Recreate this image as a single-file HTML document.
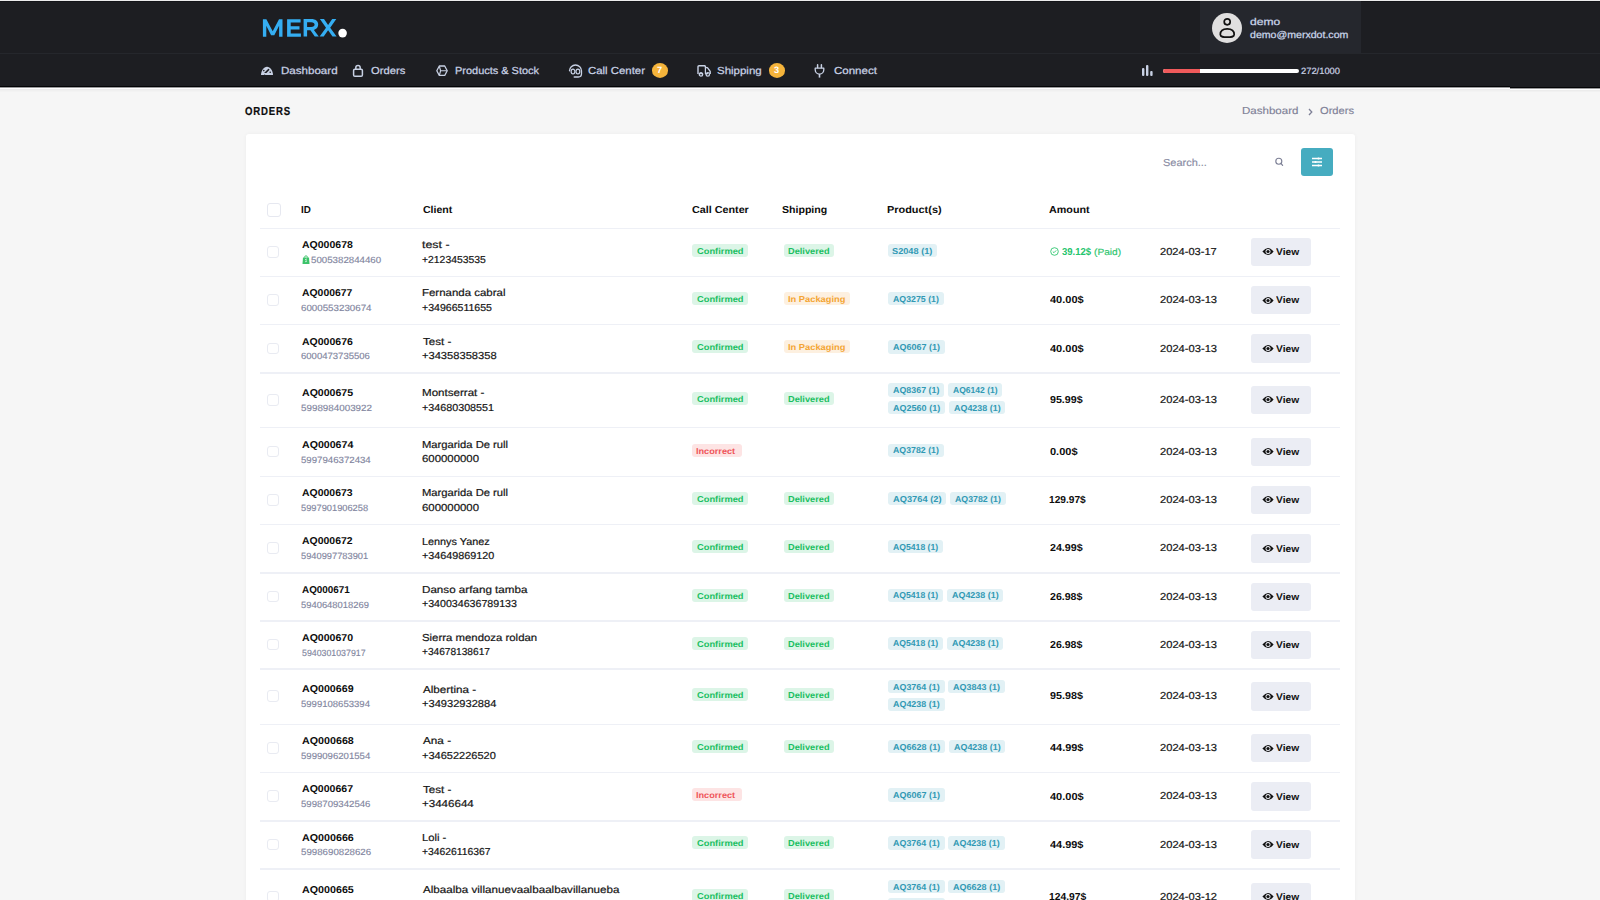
<!DOCTYPE html><html><head><meta charset="utf-8"><style>
*{margin:0;padding:0;box-sizing:border-box}
html,body{width:1600px;height:900px;overflow:hidden;background:#f6f6f6;font-family:"Liberation Sans",sans-serif}
.t{position:absolute;line-height:1;white-space:nowrap;text-rendering:geometricPrecision;transform-origin:0 0}
.abs{position:absolute}
.bd{position:absolute;border-radius:3px}
</style></head><body>

<div class="abs" style="left:0;top:0;width:1600px;height:86px;background:#1d1e22"></div>
<div class="abs" style="left:0;top:0;width:1600px;height:1px;background:#ececec"></div>
<div class="abs" style="left:0;top:1px;width:1600px;height:1px;background:#141519"></div>
<div class="abs" style="left:0;top:53px;width:1600px;height:1px;background:#25272c"></div>
<div class="abs" style="left:0;top:86px;width:1510px;height:1px;background:#040507"></div>
<div class="abs" style="left:0;top:87px;width:1510px;height:1px;background:#9a9a9c"></div>
<div class="abs" style="left:0;top:88px;width:1510px;height:1px;background:#ffffff"></div>
<div class="abs" style="left:0;top:89px;width:1510px;height:1px;background:#ececec"></div>
<div class="abs" style="left:0;top:90px;width:1510px;height:1px;background:#f0f0f0"></div>
<div class="abs" style="left:0;top:91px;width:1510px;height:1px;background:#f3f3f3"></div>
<div class="abs" style="left:1510px;top:86px;width:90px;height:1px;background:#1d1e22"></div>
<div class="abs" style="left:1510px;top:87px;width:90px;height:1px;background:#040507"></div>
<div class="abs" style="left:1510px;top:88px;width:90px;height:1px;background:#9a9a9c"></div>
<div class="abs" style="left:1510px;top:89px;width:90px;height:1px;background:#ffffff"></div>
<div class="abs" style="left:1510px;top:90px;width:90px;height:1px;background:#ececec"></div>
<div class="abs" style="left:1510px;top:91px;width:90px;height:1px;background:#f1f1f1"></div>
<svg class="abs" style="left:0;top:0" width="360" height="50" viewBox="0 0 360 50"><g fill="#35aef2"><path d="M262.9 36.7 V19.2 H266.4 L272.7 31.2 L279 19.2 H282.5 V36.7 H279.1 V25.8 L274.3 35.2 H271.1 L266.3 25.8 V36.7 Z"/><path d="M287.1 19.2 H300.6 V22.5 H290.7 V26.3 H299.5 V29.4 H290.7 V33.4 H300.9 V36.7 H287.1 Z"/><path fill-rule="evenodd" d="M303.6 36.6 V19.1 H311.3 C315.6 19.1 318.2 21.3 318.2 24.6 C318.2 27.3 316.6 29.2 313.9 29.9 L318.8 36.6 H314.8 L310.4 30.2 H307.1 V36.6 Z M307.1 22.2 V27.1 H311.1 C313.5 27.1 314.6 26.1 314.6 24.6 C314.6 23.1 313.5 22.2 311.1 22.2 Z"/><path d="M319.9 19.1 H324 L328.1 25.1 L332.2 19.1 H336.3 L330.2 27.7 L336.6 36.6 H332.5 L328.1 30.3 L323.7 36.6 H319.6 L326 27.7 Z"/></g><circle cx="342.6" cy="33.1" r="4.3" fill="#fff"/></svg>
<div class="abs" style="left:1200px;top:1px;width:161px;height:52px;background:#25272d"></div>
<div class="abs" style="left:1211.5px;top:12.5px;width:30px;height:30px;border-radius:50%;background:#e0dfdf"></div>
<svg class="abs" style="left:1211.5px;top:12.5px" width="30" height="30" viewBox="0 0 30 30"><circle cx="15.2" cy="8.8" r="3.0" fill="none" stroke="#111" stroke-width="1.7"/><path d="M8.3 21.6 C8.3 17.6 11.6 15.9 15.2 15.9 C18.8 15.9 22.2 17.6 22.2 21.6 C22.2 24.2 19.2 24.2 15.2 24.2 C11.2 24.2 8.3 24.2 8.3 21.6 Z" fill="none" stroke="#111" stroke-width="1.7"/></svg>
<div class="t" style="left:1250.27px;top:17.70px;font-size:9.8px;color:#cad6ea;font-weight:400;letter-spacing:0px;transform:scaleX(1.2304);-webkit-text-stroke:0.25px #cad6ea">demo</div>
<div class="t" style="left:1250.42px;top:31.20px;font-size:9.8px;color:#cad6ea;font-weight:400;letter-spacing:0px;transform:scaleX(1.0800);-webkit-text-stroke:0.25px #cad6ea">demo@merxdot.com</div>
<div class="t" style="left:280.86px;top:66.70px;font-size:10.2px;color:#c8d1e4;font-weight:400;letter-spacing:0px;transform:scaleX(1.1354);-webkit-text-stroke:0.25px #c8d1e4">Dashboard</div>
<div class="t" style="left:371.40px;top:66.70px;font-size:10.2px;color:#c8d1e4;font-weight:400;letter-spacing:0px;transform:scaleX(1.1000);-webkit-text-stroke:0.25px #c8d1e4">Orders</div>
<div class="t" style="left:455.22px;top:66.70px;font-size:10.2px;color:#c8d1e4;font-weight:400;letter-spacing:0px;transform:scaleX(1.0753);-webkit-text-stroke:0.25px #c8d1e4">Products &amp; Stock</div>
<div class="t" style="left:588.38px;top:66.70px;font-size:10.2px;color:#c8d1e4;font-weight:400;letter-spacing:0px;transform:scaleX(1.1184);-webkit-text-stroke:0.25px #c8d1e4">Call Center</div>
<div class="t" style="left:717.17px;top:66.70px;font-size:10.2px;color:#c8d1e4;font-weight:400;letter-spacing:0px;transform:scaleX(1.1263);-webkit-text-stroke:0.25px #c8d1e4">Shipping</div>
<div class="t" style="left:834.37px;top:66.70px;font-size:10.2px;color:#c8d1e4;font-weight:400;letter-spacing:0px;transform:scaleX(1.1297);-webkit-text-stroke:0.25px #c8d1e4">Connect</div>
<div class="abs" style="left:652px;top:63.3px;width:16px;height:14.6px;border-radius:50%;background:#f5b43b"></div>
<div class="t" style="left:657.00px;top:66.30px;font-size:9.2px;color:#fff;font-weight:700;letter-spacing:0.000px;">7</div>
<div class="abs" style="left:769px;top:63.3px;width:16px;height:14.6px;border-radius:50%;background:#f5b43b"></div>
<div class="t" style="left:774.00px;top:66.30px;font-size:9.2px;color:#fff;font-weight:700;letter-spacing:0.000px;">3</div>
<svg class="abs" style="left:260px;top:65px" width="14" height="11" viewBox="0 0 14 11"><path d="M1 10 C1 5.8 3.8 1.8 7 1.8 C10.2 1.8 13 5.8 13 10 Z" fill="#c8d1e4"/><path d="M4.6 8.6 L8.6 4.6" stroke="#1d1e22" stroke-width="1.5" stroke-linecap="round"/><circle cx="3.8" cy="5.6" r="0.8" fill="#1d1e22"/><circle cx="10.2" cy="7.2" r="0.8" fill="#1d1e22"/><path d="M2.4 8.6 H11.6" stroke="#c8d1e4" stroke-width="1.2"/></svg>
<svg class="abs" style="left:352px;top:63.5px" width="12" height="13" viewBox="0 0 12 13"><rect x="1.6" y="5.2" width="8.8" height="7" rx="1.3" fill="none" stroke="#c8d1e4" stroke-width="1.5"/><path d="M3.8 5.2 V3.8 A2.2 2.2 0 0 1 8.2 3.8 V5.2" fill="none" stroke="#c8d1e4" stroke-width="1.5"/></svg>
<svg class="abs" style="left:435.5px;top:64.5px" width="12" height="11.5" viewBox="0 0 12 11.5"><path d="M3.3 1 H8.7 L11.2 5.75 L8.7 10.5 H3.3 L0.8 5.75 Z" fill="none" stroke="#c8d1e4" stroke-width="1.3" stroke-linejoin="round"/><path d="M4.6 5.75 H10.8 M4.6 5.75 L3.4 1.3 M4.6 5.75 L3.4 10.2" fill="none" stroke="#c8d1e4" stroke-width="1.15"/></svg>
<svg class="abs" style="left:567.5px;top:63.5px" width="15" height="14" viewBox="0 0 15 14"><path d="M1.5 6.8 A6 5.8 0 0 1 13.5 6.8 V9.8 A3.2 3.2 0 0 1 10.3 13 H6.2" fill="none" stroke="#c8d1e4" stroke-width="1.3" stroke-linecap="round"/><ellipse cx="5" cy="7.6" rx="1.9" ry="2.4" fill="none" stroke="#c8d1e4" stroke-width="1.2"/><ellipse cx="9.9" cy="7.6" rx="1.9" ry="2.4" fill="none" stroke="#c8d1e4" stroke-width="1.2"/></svg>
<svg class="abs" style="left:696.5px;top:64.5px" width="14" height="12" viewBox="0 0 14 12"><path d="M1 9 V1.8 A1 1 0 0 1 2 0.8 H8 L8.8 2.6 H10.4 L13.2 6.4 V9" fill="none" stroke="#c8d1e4" stroke-width="1.4" stroke-linejoin="round"/><path d="M8.4 1.2 V8.8" stroke="#c8d1e4" stroke-width="1.2"/><path d="M2.4 8.6 H5.8 M8 8.6 H11" stroke="#c8d1e4" stroke-width="1.2"/><circle cx="4" cy="9.4" r="1.7" fill="none" stroke="#c8d1e4" stroke-width="1.3"/><circle cx="10.8" cy="9.4" r="1.7" fill="none" stroke="#c8d1e4" stroke-width="1.3"/></svg>
<svg class="abs" style="left:813.5px;top:63.5px" width="11" height="14" viewBox="0 0 11 14"><path d="M3.6 0.8 V3.4 M7.4 0.8 V3.4" stroke="#c8d1e4" stroke-width="1.5" stroke-linecap="round"/><path d="M1.2 4.2 H9.8 V5.8 A4.3 4.3 0 0 1 5.5 10.1 A4.3 4.3 0 0 1 1.2 5.8 Z" fill="none" stroke="#c8d1e4" stroke-width="1.3" stroke-linejoin="round"/><path d="M5.5 10 V13.6" stroke="#c8d1e4" stroke-width="1.6"/></svg>
<svg class="abs" style="left:1142px;top:65px" width="11" height="11" viewBox="0 0 11 11"><rect x="0" y="3" width="2.4" height="8" rx="1" fill="#c8d1e4"/><rect x="4" y="0" width="2.4" height="11" rx="1" fill="#c8d1e4"/><rect x="8.2" y="6" width="2.4" height="5" rx="1" fill="#c8d1e4"/></svg>
<div class="abs" style="left:1162.5px;top:68.8px;width:136.5px;height:4px;border-radius:2px;background:#fff;overflow:hidden"><div style="width:37px;height:4px;background:#f05a5b"></div></div>
<div class="t" style="left:1301.16px;top:66.60px;font-size:9.0px;color:#c8d0e2;font-weight:400;letter-spacing:0px;transform:scaleX(1.0389);-webkit-text-stroke:0.2px #c8d0e2">272/1000</div>
<div class="t" style="left:245.48px;top:105.90px;font-size:11.65px;color:#0b0b0b;font-weight:700;letter-spacing:1.0px;transform:scaleX(0.8226);-webkit-text-stroke:0.2px #0b0b0b">ORDERS</div>
<div class="t" style="left:1241.87px;top:107.30px;font-size:10.2px;color:#7f8197;font-weight:400;letter-spacing:0px;transform:scaleX(1.1312);-webkit-text-stroke:0.15px #7f8197">Dashboard</div>
<svg class="abs" style="left:1307.5px;top:107.5px" width="5" height="8" viewBox="0 0 5 8"><path d="M1 1 L3.8 4 L1 7" fill="none" stroke="#7f8197" stroke-width="1.3"/></svg>
<div class="t" style="left:1320.31px;top:107.30px;font-size:10.2px;color:#7f8197;font-weight:400;letter-spacing:0px;transform:scaleX(1.0933);-webkit-text-stroke:0.15px #7f8197">Orders</div>
<div class="abs" style="left:245.5px;top:133.5px;width:1109px;height:800px;background:#fff;border-radius:3px;box-shadow:0 0 4px rgba(0,0,0,0.045)"></div>
<div class="t" style="left:1162.61px;top:158.80px;font-size:10.1px;color:#8a8ca3;font-weight:400;letter-spacing:0px;transform:scaleX(1.0868);-webkit-text-stroke:0.15px #8a8ca3">Search...</div>
<svg class="abs" style="left:1274px;top:157px" width="10" height="10" viewBox="0 0 10 10"><circle cx="4.8" cy="4.2" r="3.0" fill="none" stroke="#7d8096" stroke-width="1.15"/><path d="M6.9 6.4 L8.6 8.3" stroke="#7d8096" stroke-width="1.2" stroke-linecap="round"/></svg>
<div class="abs" style="left:1301px;top:148px;width:32px;height:28px;border-radius:3px;background:#46acc0"></div>
<svg class="abs" style="left:1311px;top:156px" width="12" height="12" viewBox="0 0 12 12"><path d="M1 2.5 H11 M1 6 H11 M1 9.5 H11" stroke="#fff" stroke-width="1.3"/><circle cx="7.5" cy="2.5" r="1.1" fill="#fff"/><circle cx="4.5" cy="6" r="1.1" fill="#fff"/><circle cx="7.5" cy="9.5" r="1.1" fill="#fff"/></svg>
<div class="abs" style="left:267px;top:203px;width:14px;height:14px;border:1px solid #e6e8f0;border-radius:3px"></div>
<div class="t" style="left:301.03px;top:206.30px;font-size:10.1px;color:#0d0d0d;font-weight:700;letter-spacing:0px;transform:scaleX(0.9722);">ID</div>
<div class="t" style="left:423.00px;top:206.30px;font-size:10.1px;color:#0d0d0d;font-weight:700;letter-spacing:0px;transform:scaleX(1.0446);">Client</div>
<div class="t" style="left:692.00px;top:206.30px;font-size:10.1px;color:#0d0d0d;font-weight:700;letter-spacing:0px;transform:scaleX(1.0660);">Call Center</div>
<div class="t" style="left:781.95px;top:206.30px;font-size:10.1px;color:#0d0d0d;font-weight:700;letter-spacing:0px;transform:scaleX(1.0476);">Shipping</div>
<div class="t" style="left:886.92px;top:206.30px;font-size:10.1px;color:#0d0d0d;font-weight:700;letter-spacing:0px;transform:scaleX(1.0816);">Product(s)</div>
<div class="t" style="left:1049.00px;top:206.30px;font-size:10.1px;color:#0d0d0d;font-weight:700;letter-spacing:0px;transform:scaleX(1.0658);">Amount</div>
<div class="abs" style="left:260px;top:227.5px;width:1080px;height:1.5px;background:#eef0f6"></div>
<div class="abs" style="left:267px;top:246.00px;width:11.5px;height:11.5px;border:1px solid #e9ebf2;border-radius:3px"></div>
<div class="t" style="left:302.00px;top:241.00px;font-size:9.95px;color:#0d0d0d;font-weight:700;letter-spacing:0px;transform:scaleX(1.0573);">AQ000678</div>
<svg class="abs" style="left:301.6px;top:255.40px" width="8" height="9" viewBox="0 0 8 9"><path d="M1 2.5 H7 L7.5 9 H0.5 Z" fill="#3cc36a"/><path d="M2.5 2.5 A1.5 1.7 0 0 1 5.5 2.5" fill="none" stroke="#3cc36a" stroke-width="0.9"/><path d="M4.8 4.2 C3.5 3.8 3 4.8 4 5.4 C5 6 4.6 7 3.2 6.6" fill="none" stroke="#fff" stroke-width="0.8"/></svg>
<div class="t" style="left:311.22px;top:255.80px;font-size:9.0px;color:#8286a0;font-weight:400;letter-spacing:0px;transform:scaleX(1.0781);-webkit-text-stroke:0.15px #8286a0">5005382844460</div>
<div class="t" style="left:421.77px;top:241.20px;font-size:10.1px;color:#161616;font-weight:400;letter-spacing:0px;transform:scaleX(1.2262);-webkit-text-stroke:0.2px #161616">test -</div>
<div class="t" style="left:421.97px;top:255.70px;font-size:10.1px;color:#161616;font-weight:400;letter-spacing:0px;transform:scaleX(1.0287);-webkit-text-stroke:0.2px #161616">+2123453535</div>
<div class="bd" style="left:692px;top:243.80px;width:56px;height:13px;background:#dcf5e7"></div>
<div class="t" style="left:697.00px;top:246.80px;font-size:8.6px;color:#1bbf62;font-weight:700;letter-spacing:0px;transform:scaleX(1.0833);">Confirmed</div>
<div class="bd" style="left:784px;top:243.80px;width:50px;height:13px;background:#dcf5e7"></div>
<div class="t" style="left:787.93px;top:246.80px;font-size:8.6px;color:#1bbf62;font-weight:700;letter-spacing:0px;transform:scaleX(1.0743);">Delivered</div>
<div class="bd" style="left:888.00px;top:243.80px;width:49.30px;height:13.3px;background:#e2f1f5"></div>
<div class="t" style="left:892.33px;top:246.70px;font-size:8.6px;color:#3199b4;font-weight:700;letter-spacing:0px;transform:scaleX(1.0694);">S2048 (1)</div>
<svg class="abs" style="left:1049.5px;top:246.70px" width="9" height="9" viewBox="0 0 9 9"><circle cx="4.5" cy="4.5" r="3.8" fill="none" stroke="#2fc66f" stroke-width="0.9"/><path d="M2.8 4.6 L4 5.7 L6.2 3.4" fill="none" stroke="#2fc66f" stroke-width="0.9"/></svg>
<div class="t" style="left:1062.00px;top:248.10px;font-size:10.1px;color:#23c46c;font-weight:700;letter-spacing:0px;transform:scaleX(0.9435);">39.12$</div>
<div class="t" style="left:1093.88px;top:248.10px;font-size:9.1px;color:#2fc66f;font-weight:400;letter-spacing:0px;transform:scaleX(1.1196);-webkit-text-stroke:0.15px #2fc66f">(Paid)</div>
<div class="t" style="left:1159.70px;top:248.00px;font-size:10.1px;color:#161616;font-weight:400;letter-spacing:0px;transform:scaleX(1.1000);-webkit-text-stroke:0.2px #161616">2024-03-17</div>
<div class="bd" style="left:1251px;top:237.80px;width:60px;height:28.4px;background:#ebedf4"></div>
<svg class="abs" style="left:1262px;top:247.40px" width="12" height="9" viewBox="0 0 12 9"><path d="M0.4 4.5 Q6 -2.6 11.6 4.5 Q6 11.6 0.4 4.5 Z" fill="#111"/><circle cx="6" cy="4.5" r="2.5" fill="#ebedf4"/><circle cx="6" cy="4.5" r="1.6" fill="#111"/></svg>
<div class="t" style="left:1276.30px;top:248.20px;font-size:9.7px;color:#111;font-weight:700;letter-spacing:0px;transform:scaleX(1.0568);">View</div>
<div class="abs" style="left:260px;top:275.5px;width:1080px;height:1.5px;background:#eef0f6"></div>
<div class="abs" style="left:267px;top:294.15px;width:11.5px;height:11.5px;border:1px solid #e9ebf2;border-radius:3px"></div>
<div class="t" style="left:302.00px;top:289.15px;font-size:9.95px;color:#0d0d0d;font-weight:700;letter-spacing:0px;transform:scaleX(1.0469);">AQ000677</div>
<div class="t" style="left:301.42px;top:303.95px;font-size:9.0px;color:#8286a0;font-weight:400;letter-spacing:0px;transform:scaleX(1.0833);-webkit-text-stroke:0.15px #8286a0">6000553230674</div>
<div class="t" style="left:421.86px;top:289.35px;font-size:10.1px;color:#161616;font-weight:400;letter-spacing:0px;transform:scaleX(1.1354);-webkit-text-stroke:0.2px #161616">Fernanda cabral</div>
<div class="t" style="left:421.95px;top:303.85px;font-size:10.1px;color:#161616;font-weight:400;letter-spacing:0px;transform:scaleX(1.0462);-webkit-text-stroke:0.2px #161616">+34966511655</div>
<div class="bd" style="left:692px;top:291.95px;width:56px;height:13px;background:#dcf5e7"></div>
<div class="t" style="left:697.00px;top:294.95px;font-size:8.6px;color:#1bbf62;font-weight:700;letter-spacing:0px;transform:scaleX(1.0833);">Confirmed</div>
<div class="bd" style="left:784px;top:291.95px;width:66px;height:13px;background:#fdf0e0"></div>
<div class="t" style="left:787.92px;top:294.95px;font-size:8.6px;color:#f4a534;font-weight:700;letter-spacing:0px;transform:scaleX(1.0833);">In Packaging</div>
<div class="bd" style="left:888.00px;top:291.95px;width:55.80px;height:13.3px;background:#e2f1f5"></div>
<div class="t" style="left:893.40px;top:294.85px;font-size:8.6px;color:#3199b4;font-weight:700;letter-spacing:0px;transform:scaleX(1.0227);">AQ3275 (1)</div>
<div class="t" style="left:1049.60px;top:296.25px;font-size:10.1px;color:#0d0d0d;font-weight:700;letter-spacing:0px;transform:scaleX(1.0887);">40.00$</div>
<div class="t" style="left:1159.69px;top:296.15px;font-size:10.1px;color:#161616;font-weight:400;letter-spacing:0px;transform:scaleX(1.1050);-webkit-text-stroke:0.2px #161616">2024-03-13</div>
<div class="bd" style="left:1251px;top:285.95px;width:60px;height:28.4px;background:#ebedf4"></div>
<svg class="abs" style="left:1262px;top:295.55px" width="12" height="9" viewBox="0 0 12 9"><path d="M0.4 4.5 Q6 -2.6 11.6 4.5 Q6 11.6 0.4 4.5 Z" fill="#111"/><circle cx="6" cy="4.5" r="2.5" fill="#ebedf4"/><circle cx="6" cy="4.5" r="1.6" fill="#111"/></svg>
<div class="t" style="left:1276.30px;top:296.35px;font-size:9.7px;color:#111;font-weight:700;letter-spacing:0px;transform:scaleX(1.0568);">View</div>
<div class="abs" style="left:260px;top:323.8px;width:1080px;height:1.5px;background:#eef0f6"></div>
<div class="abs" style="left:267px;top:342.50px;width:11.5px;height:11.5px;border:1px solid #e9ebf2;border-radius:3px"></div>
<div class="t" style="left:302.00px;top:337.50px;font-size:9.95px;color:#0d0d0d;font-weight:700;letter-spacing:0px;transform:scaleX(1.0573);">AQ000676</div>
<div class="t" style="left:301.44px;top:352.30px;font-size:9.0px;color:#8286a0;font-weight:400;letter-spacing:0px;transform:scaleX(1.0586);-webkit-text-stroke:0.15px #8286a0">6000473735506</div>
<div class="t" style="left:423.00px;top:337.70px;font-size:10.1px;color:#161616;font-weight:400;letter-spacing:0px;transform:scaleX(1.1458);-webkit-text-stroke:0.2px #161616">Test -</div>
<div class="t" style="left:421.90px;top:352.20px;font-size:10.1px;color:#161616;font-weight:400;letter-spacing:0px;transform:scaleX(1.1023);-webkit-text-stroke:0.2px #161616">+34358358358</div>
<div class="bd" style="left:692px;top:340.30px;width:56px;height:13px;background:#dcf5e7"></div>
<div class="t" style="left:697.00px;top:343.30px;font-size:8.6px;color:#1bbf62;font-weight:700;letter-spacing:0px;transform:scaleX(1.0833);">Confirmed</div>
<div class="bd" style="left:784px;top:340.30px;width:66px;height:13px;background:#fdf0e0"></div>
<div class="t" style="left:787.92px;top:343.30px;font-size:8.6px;color:#f4a534;font-weight:700;letter-spacing:0px;transform:scaleX(1.0833);">In Packaging</div>
<div class="bd" style="left:888.00px;top:340.30px;width:56.80px;height:13.3px;background:#e2f1f5"></div>
<div class="t" style="left:893.40px;top:343.20px;font-size:8.6px;color:#3199b4;font-weight:700;letter-spacing:0px;transform:scaleX(1.0455);">AQ6067 (1)</div>
<div class="t" style="left:1049.60px;top:344.60px;font-size:10.1px;color:#0d0d0d;font-weight:700;letter-spacing:0px;transform:scaleX(1.0887);">40.00$</div>
<div class="t" style="left:1159.69px;top:344.50px;font-size:10.1px;color:#161616;font-weight:400;letter-spacing:0px;transform:scaleX(1.1050);-webkit-text-stroke:0.2px #161616">2024-03-13</div>
<div class="bd" style="left:1251px;top:334.30px;width:60px;height:28.4px;background:#ebedf4"></div>
<svg class="abs" style="left:1262px;top:343.90px" width="12" height="9" viewBox="0 0 12 9"><path d="M0.4 4.5 Q6 -2.6 11.6 4.5 Q6 11.6 0.4 4.5 Z" fill="#111"/><circle cx="6" cy="4.5" r="2.5" fill="#ebedf4"/><circle cx="6" cy="4.5" r="1.6" fill="#111"/></svg>
<div class="t" style="left:1276.30px;top:344.70px;font-size:9.7px;color:#111;font-weight:700;letter-spacing:0px;transform:scaleX(1.0568);">View</div>
<div class="abs" style="left:260px;top:372.2px;width:1080px;height:1.5px;background:#eef0f6"></div>
<div class="abs" style="left:267px;top:394.05px;width:11.5px;height:11.5px;border:1px solid #e9ebf2;border-radius:3px"></div>
<div class="t" style="left:302.00px;top:389.05px;font-size:9.95px;color:#0d0d0d;font-weight:700;letter-spacing:0px;transform:scaleX(1.0625);">AQ000675</div>
<div class="t" style="left:301.41px;top:403.85px;font-size:9.0px;color:#8286a0;font-weight:400;letter-spacing:0px;transform:scaleX(1.0913);-webkit-text-stroke:0.15px #8286a0">5998984003922</div>
<div class="t" style="left:421.85px;top:389.25px;font-size:10.1px;color:#161616;font-weight:400;letter-spacing:0px;transform:scaleX(1.1462);-webkit-text-stroke:0.2px #161616">Montserrat -</div>
<div class="t" style="left:421.94px;top:403.75px;font-size:10.1px;color:#161616;font-weight:400;letter-spacing:0px;transform:scaleX(1.0644);-webkit-text-stroke:0.2px #161616">+34680308551</div>
<div class="bd" style="left:692px;top:391.85px;width:56px;height:13px;background:#dcf5e7"></div>
<div class="t" style="left:697.00px;top:394.85px;font-size:8.6px;color:#1bbf62;font-weight:700;letter-spacing:0px;transform:scaleX(1.0833);">Confirmed</div>
<div class="bd" style="left:784px;top:391.85px;width:50px;height:13px;background:#dcf5e7"></div>
<div class="t" style="left:787.93px;top:394.85px;font-size:8.6px;color:#1bbf62;font-weight:700;letter-spacing:0px;transform:scaleX(1.0743);">Delivered</div>
<div class="bd" style="left:888.00px;top:383.30px;width:56.30px;height:13.3px;background:#e2f1f5"></div>
<div class="t" style="left:893.40px;top:386.20px;font-size:8.6px;color:#3199b4;font-weight:700;letter-spacing:0px;transform:scaleX(1.0341);">AQ8367 (1)</div>
<div class="bd" style="left:947.80px;top:383.30px;width:54.55px;height:13.3px;background:#e2f1f5"></div>
<div class="t" style="left:953.20px;top:386.20px;font-size:8.6px;color:#3199b4;font-weight:700;letter-spacing:0px;transform:scaleX(0.9943);">AQ6142 (1)</div>
<div class="bd" style="left:888.00px;top:401.20px;width:57.05px;height:13.3px;background:#e2f1f5"></div>
<div class="t" style="left:893.40px;top:404.10px;font-size:8.6px;color:#3199b4;font-weight:700;letter-spacing:0px;transform:scaleX(1.0511);">AQ2560 (1)</div>
<div class="bd" style="left:948.55px;top:401.20px;width:56.55px;height:13.3px;background:#e2f1f5"></div>
<div class="t" style="left:953.95px;top:404.10px;font-size:8.6px;color:#3199b4;font-weight:700;letter-spacing:0px;transform:scaleX(1.0398);">AQ4238 (1)</div>
<div class="t" style="left:1049.60px;top:396.15px;font-size:10.1px;color:#0d0d0d;font-weight:700;letter-spacing:0px;transform:scaleX(1.0565);">95.99$</div>
<div class="t" style="left:1159.69px;top:396.05px;font-size:10.1px;color:#161616;font-weight:400;letter-spacing:0px;transform:scaleX(1.1050);-webkit-text-stroke:0.2px #161616">2024-03-13</div>
<div class="bd" style="left:1251px;top:385.85px;width:60px;height:28.4px;background:#ebedf4"></div>
<svg class="abs" style="left:1262px;top:395.45px" width="12" height="9" viewBox="0 0 12 9"><path d="M0.4 4.5 Q6 -2.6 11.6 4.5 Q6 11.6 0.4 4.5 Z" fill="#111"/><circle cx="6" cy="4.5" r="2.5" fill="#ebedf4"/><circle cx="6" cy="4.5" r="1.6" fill="#111"/></svg>
<div class="t" style="left:1276.30px;top:396.25px;font-size:9.7px;color:#111;font-weight:700;letter-spacing:0px;transform:scaleX(1.0568);">View</div>
<div class="abs" style="left:260px;top:426.9px;width:1080px;height:1.5px;background:#eef0f6"></div>
<div class="abs" style="left:267px;top:445.70px;width:11.5px;height:11.5px;border:1px solid #e9ebf2;border-radius:3px"></div>
<div class="t" style="left:302.00px;top:440.70px;font-size:9.95px;color:#0d0d0d;font-weight:700;letter-spacing:0px;transform:scaleX(1.0677);">AQ000674</div>
<div class="t" style="left:301.43px;top:455.50px;font-size:9.0px;color:#8286a0;font-weight:400;letter-spacing:0px;transform:scaleX(1.0714);-webkit-text-stroke:0.15px #8286a0">5997946372434</div>
<div class="t" style="left:421.89px;top:440.90px;font-size:10.1px;color:#161616;font-weight:400;letter-spacing:0px;transform:scaleX(1.1118);-webkit-text-stroke:0.2px #161616">Margarida De rull</div>
<div class="t" style="left:421.87px;top:455.40px;font-size:10.1px;color:#161616;font-weight:400;letter-spacing:0px;transform:scaleX(1.1276);-webkit-text-stroke:0.2px #161616">600000000</div>
<div class="bd" style="left:692px;top:443.50px;width:49.5px;height:13px;background:#fde4e4"></div>
<div class="t" style="left:695.94px;top:446.50px;font-size:8.6px;color:#ef5559;font-weight:700;letter-spacing:0px;transform:scaleX(1.0625);">Incorrect</div>
<div class="bd" style="left:888.00px;top:443.50px;width:55.80px;height:13.3px;background:#e2f1f5"></div>
<div class="t" style="left:893.40px;top:446.40px;font-size:8.6px;color:#3199b4;font-weight:700;letter-spacing:0px;transform:scaleX(1.0227);">AQ3782 (1)</div>
<div class="t" style="left:1049.60px;top:447.80px;font-size:10.1px;color:#0d0d0d;font-weight:700;letter-spacing:0px;transform:scaleX(1.0900);">0.00$</div>
<div class="t" style="left:1159.69px;top:447.70px;font-size:10.1px;color:#161616;font-weight:400;letter-spacing:0px;transform:scaleX(1.1050);-webkit-text-stroke:0.2px #161616">2024-03-13</div>
<div class="bd" style="left:1251px;top:437.50px;width:60px;height:28.4px;background:#ebedf4"></div>
<svg class="abs" style="left:1262px;top:447.10px" width="12" height="9" viewBox="0 0 12 9"><path d="M0.4 4.5 Q6 -2.6 11.6 4.5 Q6 11.6 0.4 4.5 Z" fill="#111"/><circle cx="6" cy="4.5" r="2.5" fill="#ebedf4"/><circle cx="6" cy="4.5" r="1.6" fill="#111"/></svg>
<div class="t" style="left:1276.30px;top:447.90px;font-size:9.7px;color:#111;font-weight:700;letter-spacing:0px;transform:scaleX(1.0568);">View</div>
<div class="abs" style="left:260px;top:475.5px;width:1080px;height:1.5px;background:#eef0f6"></div>
<div class="abs" style="left:267px;top:494.00px;width:11.5px;height:11.5px;border:1px solid #e9ebf2;border-radius:3px"></div>
<div class="t" style="left:302.00px;top:489.00px;font-size:9.95px;color:#0d0d0d;font-weight:700;letter-spacing:0px;transform:scaleX(1.0521);">AQ000673</div>
<div class="t" style="left:301.47px;top:503.80px;font-size:9.0px;color:#8286a0;font-weight:400;letter-spacing:0px;transform:scaleX(1.0312);-webkit-text-stroke:0.15px #8286a0">5997901906258</div>
<div class="t" style="left:421.89px;top:489.20px;font-size:10.1px;color:#161616;font-weight:400;letter-spacing:0px;transform:scaleX(1.1118);-webkit-text-stroke:0.2px #161616">Margarida De rull</div>
<div class="t" style="left:421.87px;top:503.70px;font-size:10.1px;color:#161616;font-weight:400;letter-spacing:0px;transform:scaleX(1.1276);-webkit-text-stroke:0.2px #161616">600000000</div>
<div class="bd" style="left:692px;top:491.80px;width:56px;height:13px;background:#dcf5e7"></div>
<div class="t" style="left:697.00px;top:494.80px;font-size:8.6px;color:#1bbf62;font-weight:700;letter-spacing:0px;transform:scaleX(1.0833);">Confirmed</div>
<div class="bd" style="left:784px;top:491.80px;width:50px;height:13px;background:#dcf5e7"></div>
<div class="t" style="left:787.93px;top:494.80px;font-size:8.6px;color:#1bbf62;font-weight:700;letter-spacing:0px;transform:scaleX(1.0743);">Delivered</div>
<div class="bd" style="left:888.00px;top:491.80px;width:58.30px;height:13.3px;background:#e2f1f5"></div>
<div class="t" style="left:893.40px;top:494.70px;font-size:8.6px;color:#3199b4;font-weight:700;letter-spacing:0px;transform:scaleX(1.0795);">AQ3764 (2)</div>
<div class="bd" style="left:949.80px;top:491.80px;width:55.80px;height:13.3px;background:#e2f1f5"></div>
<div class="t" style="left:955.20px;top:494.70px;font-size:8.6px;color:#3199b4;font-weight:700;letter-spacing:0px;transform:scaleX(1.0227);">AQ3782 (1)</div>
<div class="t" style="left:1048.59px;top:496.10px;font-size:10.1px;color:#0d0d0d;font-weight:700;letter-spacing:0px;transform:scaleX(1.0071);">129.97$</div>
<div class="t" style="left:1159.69px;top:496.00px;font-size:10.1px;color:#161616;font-weight:400;letter-spacing:0px;transform:scaleX(1.1050);-webkit-text-stroke:0.2px #161616">2024-03-13</div>
<div class="bd" style="left:1251px;top:485.80px;width:60px;height:28.4px;background:#ebedf4"></div>
<svg class="abs" style="left:1262px;top:495.40px" width="12" height="9" viewBox="0 0 12 9"><path d="M0.4 4.5 Q6 -2.6 11.6 4.5 Q6 11.6 0.4 4.5 Z" fill="#111"/><circle cx="6" cy="4.5" r="2.5" fill="#ebedf4"/><circle cx="6" cy="4.5" r="1.6" fill="#111"/></svg>
<div class="t" style="left:1276.30px;top:496.20px;font-size:9.7px;color:#111;font-weight:700;letter-spacing:0px;transform:scaleX(1.0568);">View</div>
<div class="abs" style="left:260px;top:523.5px;width:1080px;height:1.5px;background:#eef0f6"></div>
<div class="abs" style="left:267px;top:542.35px;width:11.5px;height:11.5px;border:1px solid #e9ebf2;border-radius:3px"></div>
<div class="t" style="left:302.00px;top:537.35px;font-size:9.95px;color:#0d0d0d;font-weight:700;letter-spacing:0px;transform:scaleX(1.0521);">AQ000672</div>
<div class="t" style="left:301.47px;top:552.15px;font-size:9.0px;color:#8286a0;font-weight:400;letter-spacing:0px;transform:scaleX(1.0317);-webkit-text-stroke:0.15px #8286a0">5940997783901</div>
<div class="t" style="left:421.93px;top:537.55px;font-size:10.1px;color:#161616;font-weight:400;letter-spacing:0px;transform:scaleX(1.0738);-webkit-text-stroke:0.2px #161616">Lennys Yanez</div>
<div class="t" style="left:421.93px;top:552.05px;font-size:10.1px;color:#161616;font-weight:400;letter-spacing:0px;transform:scaleX(1.0682);-webkit-text-stroke:0.2px #161616">+34649869120</div>
<div class="bd" style="left:692px;top:540.15px;width:56px;height:13px;background:#dcf5e7"></div>
<div class="t" style="left:697.00px;top:543.15px;font-size:8.6px;color:#1bbf62;font-weight:700;letter-spacing:0px;transform:scaleX(1.0833);">Confirmed</div>
<div class="bd" style="left:784px;top:540.15px;width:50px;height:13px;background:#dcf5e7"></div>
<div class="t" style="left:787.93px;top:543.15px;font-size:8.6px;color:#1bbf62;font-weight:700;letter-spacing:0px;transform:scaleX(1.0743);">Delivered</div>
<div class="bd" style="left:888.00px;top:540.15px;width:55.05px;height:13.3px;background:#e2f1f5"></div>
<div class="t" style="left:893.40px;top:543.05px;font-size:8.6px;color:#3199b4;font-weight:700;letter-spacing:0px;transform:scaleX(1.0057);">AQ5418 (1)</div>
<div class="t" style="left:1049.60px;top:544.45px;font-size:10.1px;color:#0d0d0d;font-weight:700;letter-spacing:0px;transform:scaleX(1.0565);">24.99$</div>
<div class="t" style="left:1159.69px;top:544.35px;font-size:10.1px;color:#161616;font-weight:400;letter-spacing:0px;transform:scaleX(1.1050);-webkit-text-stroke:0.2px #161616">2024-03-13</div>
<div class="bd" style="left:1251px;top:534.15px;width:60px;height:28.4px;background:#ebedf4"></div>
<svg class="abs" style="left:1262px;top:543.75px" width="12" height="9" viewBox="0 0 12 9"><path d="M0.4 4.5 Q6 -2.6 11.6 4.5 Q6 11.6 0.4 4.5 Z" fill="#111"/><circle cx="6" cy="4.5" r="2.5" fill="#ebedf4"/><circle cx="6" cy="4.5" r="1.6" fill="#111"/></svg>
<div class="t" style="left:1276.30px;top:544.55px;font-size:9.7px;color:#111;font-weight:700;letter-spacing:0px;transform:scaleX(1.0568);">View</div>
<div class="abs" style="left:260px;top:572.2px;width:1080px;height:1.5px;background:#eef0f6"></div>
<div class="abs" style="left:267px;top:590.70px;width:11.5px;height:11.5px;border:1px solid #e9ebf2;border-radius:3px"></div>
<div class="t" style="left:302.00px;top:585.70px;font-size:9.95px;color:#0d0d0d;font-weight:700;letter-spacing:0px;transform:scaleX(0.9948);">AQ000671</div>
<div class="t" style="left:301.46px;top:600.50px;font-size:9.0px;color:#8286a0;font-weight:400;letter-spacing:0px;transform:scaleX(1.0430);-webkit-text-stroke:0.15px #8286a0">5940648018269</div>
<div class="t" style="left:421.85px;top:585.90px;font-size:10.1px;color:#161616;font-weight:400;letter-spacing:0px;transform:scaleX(1.1528);-webkit-text-stroke:0.2px #161616">Danso arfang tamba</div>
<div class="t" style="left:421.95px;top:600.40px;font-size:10.1px;color:#161616;font-weight:400;letter-spacing:0px;transform:scaleX(1.0534);-webkit-text-stroke:0.2px #161616">+340034636789133</div>
<div class="bd" style="left:692px;top:588.50px;width:56px;height:13px;background:#dcf5e7"></div>
<div class="t" style="left:697.00px;top:591.50px;font-size:8.6px;color:#1bbf62;font-weight:700;letter-spacing:0px;transform:scaleX(1.0833);">Confirmed</div>
<div class="bd" style="left:784px;top:588.50px;width:50px;height:13px;background:#dcf5e7"></div>
<div class="t" style="left:787.93px;top:591.50px;font-size:8.6px;color:#1bbf62;font-weight:700;letter-spacing:0px;transform:scaleX(1.0743);">Delivered</div>
<div class="bd" style="left:888.00px;top:588.50px;width:55.05px;height:13.3px;background:#e2f1f5"></div>
<div class="t" style="left:893.40px;top:591.40px;font-size:8.6px;color:#3199b4;font-weight:700;letter-spacing:0px;transform:scaleX(1.0057);">AQ5418 (1)</div>
<div class="bd" style="left:946.55px;top:588.50px;width:56.55px;height:13.3px;background:#e2f1f5"></div>
<div class="t" style="left:951.95px;top:591.40px;font-size:8.6px;color:#3199b4;font-weight:700;letter-spacing:0px;transform:scaleX(1.0398);">AQ4238 (1)</div>
<div class="t" style="left:1049.60px;top:592.80px;font-size:10.1px;color:#0d0d0d;font-weight:700;letter-spacing:0px;transform:scaleX(1.0484);">26.98$</div>
<div class="t" style="left:1159.69px;top:592.70px;font-size:10.1px;color:#161616;font-weight:400;letter-spacing:0px;transform:scaleX(1.1050);-webkit-text-stroke:0.2px #161616">2024-03-13</div>
<div class="bd" style="left:1251px;top:582.50px;width:60px;height:28.4px;background:#ebedf4"></div>
<svg class="abs" style="left:1262px;top:592.10px" width="12" height="9" viewBox="0 0 12 9"><path d="M0.4 4.5 Q6 -2.6 11.6 4.5 Q6 11.6 0.4 4.5 Z" fill="#111"/><circle cx="6" cy="4.5" r="2.5" fill="#ebedf4"/><circle cx="6" cy="4.5" r="1.6" fill="#111"/></svg>
<div class="t" style="left:1276.30px;top:592.90px;font-size:9.7px;color:#111;font-weight:700;letter-spacing:0px;transform:scaleX(1.0568);">View</div>
<div class="abs" style="left:260px;top:620.2px;width:1080px;height:1.5px;background:#eef0f6"></div>
<div class="abs" style="left:267px;top:638.70px;width:11.5px;height:11.5px;border:1px solid #e9ebf2;border-radius:3px"></div>
<div class="t" style="left:302.00px;top:633.70px;font-size:9.95px;color:#0d0d0d;font-weight:700;letter-spacing:0px;transform:scaleX(1.0625);">AQ000670</div>
<div class="t" style="left:301.52px;top:648.50px;font-size:9.0px;color:#8286a0;font-weight:400;letter-spacing:0px;transform:scaleX(0.9766);-webkit-text-stroke:0.15px #8286a0">5940301037917</div>
<div class="t" style="left:421.87px;top:633.90px;font-size:10.1px;color:#161616;font-weight:400;letter-spacing:0px;transform:scaleX(1.1275);-webkit-text-stroke:0.2px #161616">Sierra mendoza roldan</div>
<div class="t" style="left:422.00px;top:648.40px;font-size:10.1px;color:#161616;font-weight:400;letter-spacing:0px;transform:scaleX(1.0038);-webkit-text-stroke:0.2px #161616">+34678138617</div>
<div class="bd" style="left:692px;top:636.50px;width:56px;height:13px;background:#dcf5e7"></div>
<div class="t" style="left:697.00px;top:639.50px;font-size:8.6px;color:#1bbf62;font-weight:700;letter-spacing:0px;transform:scaleX(1.0833);">Confirmed</div>
<div class="bd" style="left:784px;top:636.50px;width:50px;height:13px;background:#dcf5e7"></div>
<div class="t" style="left:787.93px;top:639.50px;font-size:8.6px;color:#1bbf62;font-weight:700;letter-spacing:0px;transform:scaleX(1.0743);">Delivered</div>
<div class="bd" style="left:888.00px;top:636.50px;width:55.05px;height:13.3px;background:#e2f1f5"></div>
<div class="t" style="left:893.40px;top:639.40px;font-size:8.6px;color:#3199b4;font-weight:700;letter-spacing:0px;transform:scaleX(1.0057);">AQ5418 (1)</div>
<div class="bd" style="left:946.55px;top:636.50px;width:56.55px;height:13.3px;background:#e2f1f5"></div>
<div class="t" style="left:951.95px;top:639.40px;font-size:8.6px;color:#3199b4;font-weight:700;letter-spacing:0px;transform:scaleX(1.0398);">AQ4238 (1)</div>
<div class="t" style="left:1049.60px;top:640.80px;font-size:10.1px;color:#0d0d0d;font-weight:700;letter-spacing:0px;transform:scaleX(1.0484);">26.98$</div>
<div class="t" style="left:1159.69px;top:640.70px;font-size:10.1px;color:#161616;font-weight:400;letter-spacing:0px;transform:scaleX(1.1050);-webkit-text-stroke:0.2px #161616">2024-03-13</div>
<div class="bd" style="left:1251px;top:630.50px;width:60px;height:28.4px;background:#ebedf4"></div>
<svg class="abs" style="left:1262px;top:640.10px" width="12" height="9" viewBox="0 0 12 9"><path d="M0.4 4.5 Q6 -2.6 11.6 4.5 Q6 11.6 0.4 4.5 Z" fill="#111"/><circle cx="6" cy="4.5" r="2.5" fill="#ebedf4"/><circle cx="6" cy="4.5" r="1.6" fill="#111"/></svg>
<div class="t" style="left:1276.30px;top:640.90px;font-size:9.7px;color:#111;font-weight:700;letter-spacing:0px;transform:scaleX(1.0568);">View</div>
<div class="abs" style="left:260px;top:668.2px;width:1080px;height:1.5px;background:#eef0f6"></div>
<div class="abs" style="left:267px;top:690.35px;width:11.5px;height:11.5px;border:1px solid #e9ebf2;border-radius:3px"></div>
<div class="t" style="left:302.00px;top:685.35px;font-size:9.95px;color:#0d0d0d;font-weight:700;letter-spacing:0px;transform:scaleX(1.0729);">AQ000669</div>
<div class="t" style="left:301.44px;top:700.15px;font-size:9.0px;color:#8286a0;font-weight:400;letter-spacing:0px;transform:scaleX(1.0595);-webkit-text-stroke:0.15px #8286a0">5999108653394</div>
<div class="t" style="left:423.00px;top:685.55px;font-size:10.1px;color:#161616;font-weight:400;letter-spacing:0px;transform:scaleX(1.1556);-webkit-text-stroke:0.2px #161616">Albertina -</div>
<div class="t" style="left:421.90px;top:700.05px;font-size:10.1px;color:#161616;font-weight:400;letter-spacing:0px;transform:scaleX(1.0985);-webkit-text-stroke:0.2px #161616">+34932932884</div>
<div class="bd" style="left:692px;top:688.15px;width:56px;height:13px;background:#dcf5e7"></div>
<div class="t" style="left:697.00px;top:691.15px;font-size:8.6px;color:#1bbf62;font-weight:700;letter-spacing:0px;transform:scaleX(1.0833);">Confirmed</div>
<div class="bd" style="left:784px;top:688.15px;width:50px;height:13px;background:#dcf5e7"></div>
<div class="t" style="left:787.93px;top:691.15px;font-size:8.6px;color:#1bbf62;font-weight:700;letter-spacing:0px;transform:scaleX(1.0743);">Delivered</div>
<div class="bd" style="left:888.00px;top:679.60px;width:56.55px;height:13.3px;background:#e2f1f5"></div>
<div class="t" style="left:893.40px;top:682.50px;font-size:8.6px;color:#3199b4;font-weight:700;letter-spacing:0px;transform:scaleX(1.0398);">AQ3764 (1)</div>
<div class="bd" style="left:948.05px;top:679.60px;width:56.80px;height:13.3px;background:#e2f1f5"></div>
<div class="t" style="left:953.45px;top:682.50px;font-size:8.6px;color:#3199b4;font-weight:700;letter-spacing:0px;transform:scaleX(1.0455);">AQ3843 (1)</div>
<div class="bd" style="left:888.00px;top:697.50px;width:56.55px;height:13.3px;background:#e2f1f5"></div>
<div class="t" style="left:893.40px;top:700.40px;font-size:8.6px;color:#3199b4;font-weight:700;letter-spacing:0px;transform:scaleX(1.0398);">AQ4238 (1)</div>
<div class="t" style="left:1049.60px;top:692.45px;font-size:10.1px;color:#0d0d0d;font-weight:700;letter-spacing:0px;transform:scaleX(1.0645);">95.98$</div>
<div class="t" style="left:1159.69px;top:692.35px;font-size:10.1px;color:#161616;font-weight:400;letter-spacing:0px;transform:scaleX(1.1050);-webkit-text-stroke:0.2px #161616">2024-03-13</div>
<div class="bd" style="left:1251px;top:682.15px;width:60px;height:28.4px;background:#ebedf4"></div>
<svg class="abs" style="left:1262px;top:691.75px" width="12" height="9" viewBox="0 0 12 9"><path d="M0.4 4.5 Q6 -2.6 11.6 4.5 Q6 11.6 0.4 4.5 Z" fill="#111"/><circle cx="6" cy="4.5" r="2.5" fill="#ebedf4"/><circle cx="6" cy="4.5" r="1.6" fill="#111"/></svg>
<div class="t" style="left:1276.30px;top:692.55px;font-size:9.7px;color:#111;font-weight:700;letter-spacing:0px;transform:scaleX(1.0568);">View</div>
<div class="abs" style="left:260px;top:723.5px;width:1080px;height:1.5px;background:#eef0f6"></div>
<div class="abs" style="left:267px;top:742.15px;width:11.5px;height:11.5px;border:1px solid #e9ebf2;border-radius:3px"></div>
<div class="t" style="left:302.00px;top:737.15px;font-size:9.95px;color:#0d0d0d;font-weight:700;letter-spacing:0px;transform:scaleX(1.0781);">AQ000668</div>
<div class="t" style="left:301.44px;top:751.95px;font-size:9.0px;color:#8286a0;font-weight:400;letter-spacing:0px;transform:scaleX(1.0635);-webkit-text-stroke:0.15px #8286a0">5999096201554</div>
<div class="t" style="left:423.00px;top:737.35px;font-size:10.1px;color:#161616;font-weight:400;letter-spacing:0px;transform:scaleX(1.1630);-webkit-text-stroke:0.2px #161616">Ana -</div>
<div class="t" style="left:421.91px;top:751.85px;font-size:10.1px;color:#161616;font-weight:400;letter-spacing:0px;transform:scaleX(1.0909);-webkit-text-stroke:0.2px #161616">+34652226520</div>
<div class="bd" style="left:692px;top:739.95px;width:56px;height:13px;background:#dcf5e7"></div>
<div class="t" style="left:697.00px;top:742.95px;font-size:8.6px;color:#1bbf62;font-weight:700;letter-spacing:0px;transform:scaleX(1.0833);">Confirmed</div>
<div class="bd" style="left:784px;top:739.95px;width:50px;height:13px;background:#dcf5e7"></div>
<div class="t" style="left:787.93px;top:742.95px;font-size:8.6px;color:#1bbf62;font-weight:700;letter-spacing:0px;transform:scaleX(1.0743);">Delivered</div>
<div class="bd" style="left:888.00px;top:739.95px;width:57.05px;height:13.3px;background:#e2f1f5"></div>
<div class="t" style="left:893.40px;top:742.85px;font-size:8.6px;color:#3199b4;font-weight:700;letter-spacing:0px;transform:scaleX(1.0511);">AQ6628 (1)</div>
<div class="bd" style="left:948.55px;top:739.95px;width:56.55px;height:13.3px;background:#e2f1f5"></div>
<div class="t" style="left:953.95px;top:742.85px;font-size:8.6px;color:#3199b4;font-weight:700;letter-spacing:0px;transform:scaleX(1.0398);">AQ4238 (1)</div>
<div class="t" style="left:1049.60px;top:744.25px;font-size:10.1px;color:#0d0d0d;font-weight:700;letter-spacing:0px;transform:scaleX(1.0806);">44.99$</div>
<div class="t" style="left:1159.69px;top:744.15px;font-size:10.1px;color:#161616;font-weight:400;letter-spacing:0px;transform:scaleX(1.1050);-webkit-text-stroke:0.2px #161616">2024-03-13</div>
<div class="bd" style="left:1251px;top:733.95px;width:60px;height:28.4px;background:#ebedf4"></div>
<svg class="abs" style="left:1262px;top:743.55px" width="12" height="9" viewBox="0 0 12 9"><path d="M0.4 4.5 Q6 -2.6 11.6 4.5 Q6 11.6 0.4 4.5 Z" fill="#111"/><circle cx="6" cy="4.5" r="2.5" fill="#ebedf4"/><circle cx="6" cy="4.5" r="1.6" fill="#111"/></svg>
<div class="t" style="left:1276.30px;top:744.35px;font-size:9.7px;color:#111;font-weight:700;letter-spacing:0px;transform:scaleX(1.0568);">View</div>
<div class="abs" style="left:260px;top:771.8px;width:1080px;height:1.5px;background:#eef0f6"></div>
<div class="abs" style="left:267px;top:790.45px;width:11.5px;height:11.5px;border:1px solid #e9ebf2;border-radius:3px"></div>
<div class="t" style="left:302.00px;top:785.45px;font-size:9.95px;color:#0d0d0d;font-weight:700;letter-spacing:0px;transform:scaleX(1.0625);">AQ000667</div>
<div class="t" style="left:301.43px;top:800.25px;font-size:9.0px;color:#8286a0;font-weight:400;letter-spacing:0px;transform:scaleX(1.0664);-webkit-text-stroke:0.15px #8286a0">5998709342546</div>
<div class="t" style="left:423.00px;top:785.65px;font-size:10.1px;color:#161616;font-weight:400;letter-spacing:0px;transform:scaleX(1.1458);-webkit-text-stroke:0.2px #161616">Test -</div>
<div class="t" style="left:421.85px;top:800.15px;font-size:10.1px;color:#161616;font-weight:400;letter-spacing:0px;transform:scaleX(1.1453);-webkit-text-stroke:0.2px #161616">+3446644</div>
<div class="bd" style="left:692px;top:788.25px;width:49.5px;height:13px;background:#fde4e4"></div>
<div class="t" style="left:695.94px;top:791.25px;font-size:8.6px;color:#ef5559;font-weight:700;letter-spacing:0px;transform:scaleX(1.0625);">Incorrect</div>
<div class="bd" style="left:888.00px;top:788.25px;width:56.80px;height:13.3px;background:#e2f1f5"></div>
<div class="t" style="left:893.40px;top:791.15px;font-size:8.6px;color:#3199b4;font-weight:700;letter-spacing:0px;transform:scaleX(1.0455);">AQ6067 (1)</div>
<div class="t" style="left:1049.60px;top:792.55px;font-size:10.1px;color:#0d0d0d;font-weight:700;letter-spacing:0px;transform:scaleX(1.0887);">40.00$</div>
<div class="t" style="left:1159.69px;top:792.45px;font-size:10.1px;color:#161616;font-weight:400;letter-spacing:0px;transform:scaleX(1.1050);-webkit-text-stroke:0.2px #161616">2024-03-13</div>
<div class="bd" style="left:1251px;top:782.25px;width:60px;height:28.4px;background:#ebedf4"></div>
<svg class="abs" style="left:1262px;top:791.85px" width="12" height="9" viewBox="0 0 12 9"><path d="M0.4 4.5 Q6 -2.6 11.6 4.5 Q6 11.6 0.4 4.5 Z" fill="#111"/><circle cx="6" cy="4.5" r="2.5" fill="#ebedf4"/><circle cx="6" cy="4.5" r="1.6" fill="#111"/></svg>
<div class="t" style="left:1276.30px;top:792.65px;font-size:9.7px;color:#111;font-weight:700;letter-spacing:0px;transform:scaleX(1.0568);">View</div>
<div class="abs" style="left:260px;top:820.1px;width:1080px;height:1.5px;background:#eef0f6"></div>
<div class="abs" style="left:267px;top:838.65px;width:11.5px;height:11.5px;border:1px solid #e9ebf2;border-radius:3px"></div>
<div class="t" style="left:302.00px;top:833.65px;font-size:9.95px;color:#0d0d0d;font-weight:700;letter-spacing:0px;transform:scaleX(1.0781);">AQ000666</div>
<div class="t" style="left:301.42px;top:848.45px;font-size:9.0px;color:#8286a0;font-weight:400;letter-spacing:0px;transform:scaleX(1.0781);-webkit-text-stroke:0.15px #8286a0">5998690828626</div>
<div class="t" style="left:421.89px;top:833.85px;font-size:10.1px;color:#161616;font-weight:400;letter-spacing:0px;transform:scaleX(1.1125);-webkit-text-stroke:0.2px #161616">Loli -</div>
<div class="t" style="left:421.98px;top:848.35px;font-size:10.1px;color:#161616;font-weight:400;letter-spacing:0px;transform:scaleX(1.0231);-webkit-text-stroke:0.2px #161616">+34626116367</div>
<div class="bd" style="left:692px;top:836.45px;width:56px;height:13px;background:#dcf5e7"></div>
<div class="t" style="left:697.00px;top:839.45px;font-size:8.6px;color:#1bbf62;font-weight:700;letter-spacing:0px;transform:scaleX(1.0833);">Confirmed</div>
<div class="bd" style="left:784px;top:836.45px;width:50px;height:13px;background:#dcf5e7"></div>
<div class="t" style="left:787.93px;top:839.45px;font-size:8.6px;color:#1bbf62;font-weight:700;letter-spacing:0px;transform:scaleX(1.0743);">Delivered</div>
<div class="bd" style="left:888.00px;top:836.45px;width:56.55px;height:13.3px;background:#e2f1f5"></div>
<div class="t" style="left:893.40px;top:839.35px;font-size:8.6px;color:#3199b4;font-weight:700;letter-spacing:0px;transform:scaleX(1.0398);">AQ3764 (1)</div>
<div class="bd" style="left:948.05px;top:836.45px;width:56.55px;height:13.3px;background:#e2f1f5"></div>
<div class="t" style="left:953.45px;top:839.35px;font-size:8.6px;color:#3199b4;font-weight:700;letter-spacing:0px;transform:scaleX(1.0398);">AQ4238 (1)</div>
<div class="t" style="left:1049.60px;top:840.75px;font-size:10.1px;color:#0d0d0d;font-weight:700;letter-spacing:0px;transform:scaleX(1.0806);">44.99$</div>
<div class="t" style="left:1159.69px;top:840.65px;font-size:10.1px;color:#161616;font-weight:400;letter-spacing:0px;transform:scaleX(1.1050);-webkit-text-stroke:0.2px #161616">2024-03-13</div>
<div class="bd" style="left:1251px;top:830.45px;width:60px;height:28.4px;background:#ebedf4"></div>
<svg class="abs" style="left:1262px;top:840.05px" width="12" height="9" viewBox="0 0 12 9"><path d="M0.4 4.5 Q6 -2.6 11.6 4.5 Q6 11.6 0.4 4.5 Z" fill="#111"/><circle cx="6" cy="4.5" r="2.5" fill="#ebedf4"/><circle cx="6" cy="4.5" r="1.6" fill="#111"/></svg>
<div class="t" style="left:1276.30px;top:840.85px;font-size:9.7px;color:#111;font-weight:700;letter-spacing:0px;transform:scaleX(1.0568);">View</div>
<div class="abs" style="left:260px;top:868.2px;width:1080px;height:1.5px;background:#eef0f6"></div>
<div class="abs" style="left:267px;top:890.85px;width:11.5px;height:11.5px;border:1px solid #e9ebf2;border-radius:3px"></div>
<div class="t" style="left:302.00px;top:885.85px;font-size:9.95px;color:#0d0d0d;font-weight:700;letter-spacing:0px;transform:scaleX(1.0781);">AQ000665</div>
<div class="t" style="left:301.45px;top:900.65px;font-size:9.0px;color:#8286a0;font-weight:400;letter-spacing:0px;transform:scaleX(1.0469);-webkit-text-stroke:0.15px #8286a0">5998610000000</div>
<div class="t" style="left:423.00px;top:886.05px;font-size:10.1px;color:#161616;font-weight:400;letter-spacing:0px;transform:scaleX(1.1515);-webkit-text-stroke:0.2px #161616">Albaalba villanuevaalbaalbavillanueba</div>
<div class="t" style="left:421.88px;top:900.55px;font-size:10.1px;color:#161616;font-weight:400;letter-spacing:0px;transform:scaleX(1.1212);-webkit-text-stroke:0.2px #161616">+34600000000</div>
<div class="bd" style="left:692px;top:888.65px;width:56px;height:13px;background:#dcf5e7"></div>
<div class="t" style="left:697.00px;top:891.65px;font-size:8.6px;color:#1bbf62;font-weight:700;letter-spacing:0px;transform:scaleX(1.0833);">Confirmed</div>
<div class="bd" style="left:784px;top:888.65px;width:50px;height:13px;background:#dcf5e7"></div>
<div class="t" style="left:787.93px;top:891.65px;font-size:8.6px;color:#1bbf62;font-weight:700;letter-spacing:0px;transform:scaleX(1.0743);">Delivered</div>
<div class="bd" style="left:888.00px;top:880.10px;width:56.55px;height:13.3px;background:#e2f1f5"></div>
<div class="t" style="left:893.40px;top:883.00px;font-size:8.6px;color:#3199b4;font-weight:700;letter-spacing:0px;transform:scaleX(1.0398);">AQ3764 (1)</div>
<div class="bd" style="left:948.05px;top:880.10px;width:57.05px;height:13.3px;background:#e2f1f5"></div>
<div class="t" style="left:953.45px;top:883.00px;font-size:8.6px;color:#3199b4;font-weight:700;letter-spacing:0px;transform:scaleX(1.0511);">AQ6628 (1)</div>
<div class="bd" style="left:888.00px;top:898.00px;width:56.55px;height:13.3px;background:#e2f1f5"></div>
<div class="t" style="left:893.40px;top:900.90px;font-size:8.6px;color:#3199b4;font-weight:700;letter-spacing:0px;transform:scaleX(1.0398);">AQ4238 (1)</div>
<div class="t" style="left:1048.58px;top:892.95px;font-size:10.1px;color:#0d0d0d;font-weight:700;letter-spacing:0px;transform:scaleX(1.0214);">124.97$</div>
<div class="t" style="left:1159.69px;top:892.85px;font-size:10.1px;color:#161616;font-weight:400;letter-spacing:0px;transform:scaleX(1.1050);-webkit-text-stroke:0.2px #161616">2024-03-12</div>
<div class="bd" style="left:1251px;top:882.65px;width:60px;height:28.4px;background:#ebedf4"></div>
<svg class="abs" style="left:1262px;top:892.25px" width="12" height="9" viewBox="0 0 12 9"><path d="M0.4 4.5 Q6 -2.6 11.6 4.5 Q6 11.6 0.4 4.5 Z" fill="#111"/><circle cx="6" cy="4.5" r="2.5" fill="#ebedf4"/><circle cx="6" cy="4.5" r="1.6" fill="#111"/></svg>
<div class="t" style="left:1276.30px;top:893.05px;font-size:9.7px;color:#111;font-weight:700;letter-spacing:0px;transform:scaleX(1.0568);">View</div>
</body></html>
